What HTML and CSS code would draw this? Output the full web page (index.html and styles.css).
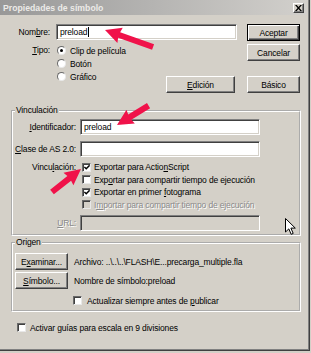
FILE: index.html
```html
<!DOCTYPE html>
<html lang="es">
<head>
<meta charset="utf-8">
<title>Propiedades de símbolo</title>
<link rel="stylesheet" href="styles.css">
</head>
<body>
<div class="window">
  <div class="titlebar">
    <span class="title">Propiedades de símbolo</span>
    <span class="close"><svg width="7" height="6" viewBox="0 0 7 6"><path d="M0 0h1.8l1.7 2.1L5.2 0H7L4.4 3 7 6H5.2L3.5 3.9 1.8 6H0l2.6-3z" fill="#000"/></svg></span>
  </div>
  <div class="content">
    <div class="top">
      <div class="top-left">
        <div class="name-row">
          <span class="lbl w-name">Nom<u>b</u>re:</span>
          <div class="field name-field"><span>preload</span><span class="caret"></span></div>
        </div>
        <div class="tipo-row">
          <span class="lbl w-tipo"><u>T</u>ipo:</span>
          <div class="radios">
            <div class="opt"><span class="radio on"></span><span>Clip de película</span></div>
            <div class="opt"><span class="radio"></span><span>Botón</span></div>
            <div class="opt"><span class="radio"></span><span>Gráfico</span></div>
          </div>
          <div class="btn btn-edicion"><span><u>E</u>dición</span></div>
        </div>
      </div>
      <div class="top-right">
        <div class="btn btn-default"><span>Aceptar</span></div>
        <div class="btn btn-cancel"><span>Cancelar</span></div>
        <div class="btn btn-basico"><span>Básico</span></div>
      </div>
    </div>

    <fieldset class="group group-vinc">
      <legend>Vinculación</legend>
      <div class="vrow first">
        <span class="lbl w-v"><u>I</u>dentificador:</span>
        <div class="field wide"><span>preload</span></div>
      </div>
      <div class="vrow second">
        <span class="lbl w-v"><u>C</u>lase de AS 2.0:</span>
        <div class="field wide"></div>
      </div>
      <div class="vchecks">
        <span class="lbl w-v vlbl">Vincu<u>l</u>ación:</span>
        <div class="checks">
          <div class="copt"><span class="check on"><svg width="7" height="7" viewBox="0 0 7 7"><path d="M0.5 2.8L2.6 4.9L6.5 1" fill="none" stroke="#000" stroke-width="1.6"/></svg></span><span>Exportar para Actio<u>n</u>Script</span></div>
          <div class="copt"><span class="check"></span><span>Exp<u>o</u>rtar para compartir tiempo de ejecución</span></div>
          <div class="copt"><span class="check on"><svg width="7" height="7" viewBox="0 0 7 7"><path d="M0.5 2.8L2.6 4.9L6.5 1" fill="none" stroke="#000" stroke-width="1.6"/></svg></span><span>Exportar en primer <u>f</u>otograma</span></div>
          <div class="copt disabled"><span class="check off"></span><span>I<u>m</u>portar para compartir tiempo de ejecución</span></div>
        </div>
      </div>
      <div class="vrow url-row">
        <span class="lbl w-v disabled"><u>U</u>RL:</span>
        <div class="field wide off"></div>
      </div>
    </fieldset>

    <fieldset class="group group-origen">
      <legend>Origen</legend>
      <div class="orow first">
        <div class="btn btn-small"><span>E<u>x</u>aminar...</span></div>
        <span class="otext">Archivo: ..\..\..\FLASH\E...precarga_multiple.fla</span>
      </div>
      <div class="orow second">
        <div class="btn btn-small"><span><u>S</u>ímbolo...</span></div>
        <span class="otext">Nombre de símbolo:preload</span>
      </div>
      <div class="copt update"><span class="check"></span><span>Actualizar siempre antes de <u>p</u>ublicar</span></div>
    </fieldset>

    <div class="copt bottom-check"><span class="check"></span><span>Activar guías para escala en 9 divisiones</span></div>
  </div>

  <svg class="overlay" width="311" height="353" viewBox="0 0 311 353">
    <g fill="#f0124a">
      <path transform="translate(105 30) rotate(19.5)" d="M0 0L16 -8L15 -3L51 -3L51 3L15 3L16 8Z"/>
      <path transform="translate(117 125) rotate(-31.5)" d="M0 0L16 -8L15 -3L37 -3L37 3L15 3L16 8Z"/>
      <path transform="translate(81 169) rotate(141.6)" d="M0 0L16 -8L15 -3L37 -3L37 3L15 3L16 8Z"/>
    </g>
    <path transform="translate(285.5 218.5)" d="M0 0V13.5L3.3 10.4L5.7 15.8L7.7 14.9L5.4 9.6H9.8Z" fill="#fff" stroke="#000" stroke-width="1" stroke-linejoin="miter"/>
  </svg>
</div>
</body>
</html>
```

FILE: styles.css
```css
* { box-sizing: border-box; }

html, body {
  margin: 0;
  padding: 0;
}

body {
  width: 311px;
  height: 353px;
  background: #d4d0c8;
  font-family: "Liberation Sans", Arial, sans-serif;
  font-size: 8.5px;
  letter-spacing: -0.15px;
  color: #000;
  overflow: hidden;
}

u { text-decoration: underline; text-underline-offset: 1px; }

.window {
  position: relative;
  width: 310px;
  height: 351px;
  background: #d4d0c8;
  border-right: 1px solid #404040;
  border-bottom: 1px solid #404040;
  box-shadow: inset -1px -1px #808080;
  display: flex;
  flex-direction: column;
}

.titlebar {
  height: 15px;
  margin-right: 2px;
  background: linear-gradient(to right, #989898, #d2d0cc);
  display: flex;
  align-items: center;
  justify-content: space-between;
  padding: 0 3px 0 3px;
}

.title {
  color: #ecebe8;
  font-weight: bold;
  font-size: 8.7px;
  letter-spacing: 0;
}

.close {
  width: 11px;
  height: 10px;
  background: #d4d0c8;
  border: 1px solid;
  border-color: #fff #404040 #404040 #fff;
  box-shadow: inset -1px -1px #808080;
  display: flex;
  align-items: center;
  justify-content: center;
}

.close svg { display: block; }

.content {
  padding-top: 9px;
  display: flex;
  flex-direction: column;
}

.top {
  display: flex;
}

.top-left {
  width: 237px;
  display: flex;
  flex-direction: column;
}

.top-right {
  margin-left: 10px;
  width: 53px;
  display: flex;
  flex-direction: column;
}

.lbl {
  flex-shrink: 0;
  text-align: right;
  white-space: nowrap;
}

.name-row {
  display: flex;
  align-items: center;
  height: 16px;
}

.w-name { width: 50px; }

.field {
  height: 16px;
  background: #fff;
  border: 1px solid;
  border-color: #808080 #fff #fff #808080;
  box-shadow: inset 1px 1px #404040, inset -1px -1px #d4d0c8;
  padding: 0 3px;
  display: flex;
  align-items: center;
  white-space: nowrap;
}

.name-field {
  margin-left: 6px;
  width: 181px;
}

.caret {
  display: inline-block;
  width: 1px;
  height: 10px;
  background: #000;
  margin-left: 1px;
}

.tipo-row {
  display: flex;
  margin-top: 4px;
}

.w-tipo {
  width: 50px;
  line-height: 13px;
}

.radios {
  margin-left: 7px;
  display: flex;
  flex-direction: column;
}

.opt {
  height: 13px;
  display: flex;
  align-items: center;
  white-space: nowrap;
}

.radio {
  width: 9px;
  height: 9px;
  border-radius: 50%;
  background: #fff;
  border: 1px solid;
  border-color: #6a6a6a #e8e8e8 #e8e8e8 #6a6a6a;
  margin-right: 4px;
  display: flex;
  align-items: center;
  justify-content: center;
}

.radio.on::after {
  content: "";
  width: 3px;
  height: 3px;
  border-radius: 50%;
  background: #000;
}

.btn {
  height: 17px;
  background: #d4d0c8;
  border: 1px solid;
  border-color: #fff #404040 #404040 #fff;
  box-shadow: inset -1px -1px #808080;
  display: flex;
  align-items: center;
  justify-content: center;
  white-space: nowrap;
}

.btn-default {
  border-color: #000;
  box-shadow: inset 1px 1px #fff, inset -1px -1px #404040, inset -2px -2px #808080;
}

.btn-cancel { margin-top: 3px; }
.btn-basico { margin-top: 15px; }

.btn-edicion {
  width: 69px;
  margin-left: auto;
  margin-right: 2px;
  margin-top: 32px;
  align-self: flex-start;
}

.group {
  margin: 12px 0 0 11px;
  width: 290px;
  padding: 0 0 3px 0;
  border: 2px groove #fff;
  min-width: 0;
}

.group legend {
  padding: 0 1px;
  margin-left: 2px;
  line-height: 11px;
}

.vrow {
  display: flex;
  align-items: center;
  height: 16px;
}

.vrow.first { margin-top: 3px; }
.vrow.second { margin-top: 6px; }

.w-v { width: 63px; }

.wide {
  margin-left: 4px;
  width: 180px;
}

.field.off { background: #d4d0c8; }

.vchecks {
  display: flex;
  margin-top: 4px;
}

.vlbl {
  line-height: 12.5px;
}

.checks {
  margin-left: 6px;
  display: flex;
  flex-direction: column;
}

.copt {
  height: 12.5px;
  display: flex;
  align-items: center;
  white-space: nowrap;
}

.check {
  width: 9px;
  height: 9px;
  flex-shrink: 0;
  background: #fff;
  border: 1px solid;
  border-color: #6a6a6a #e8e8e8 #e8e8e8 #6a6a6a;
  box-shadow: inset 1px 1px #404040;
  margin-right: 3px;
  display: flex;
  align-items: center;
  justify-content: center;
}

.check svg { display: block; margin: 1px 0 0 1px; }

.check.off { background: #d4d0c8; }

.disabled {
  color: #8a8a8a;
  text-shadow: 1px 1px 0 #fff;
}

.url-row { margin-top: 4px; }

.group-origen {
  margin-top: 1px;
  padding-bottom: 3.5px;
}

.orow {
  display: flex;
  align-items: center;
}

.orow.first { margin-top: 5px; }
.orow.second { margin-top: 2px; }

.btn-small {
  width: 53px;
  margin-left: 2px;
}

.otext {
  margin-left: 6px;
  white-space: nowrap;
}

.update {
  margin-top: 5.5px;
  margin-left: 60px;
  height: 12px;
}

.update .check { margin-right: 5px; }

.bottom-check {
  margin-top: 9.5px;
  margin-left: 17px;
  height: 12px;
}

.bottom-check .check { margin-right: 4px; }

.overlay {
  position: absolute;
  left: 0;
  top: 0;
  pointer-events: none;
}
```
